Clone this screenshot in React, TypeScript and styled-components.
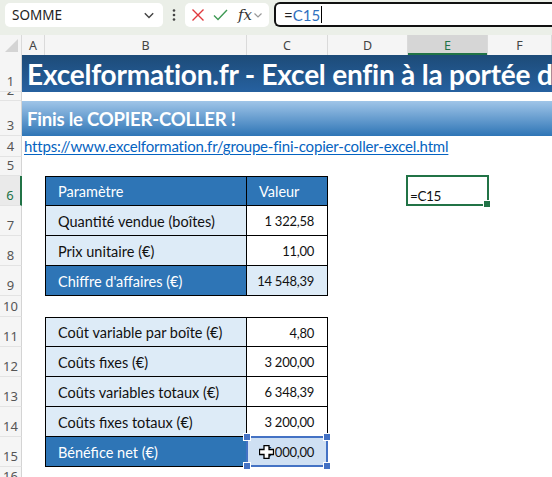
import React from 'react'
import styled, { createGlobalStyle, css } from 'styled-components'

const COLS = '22px 23px 202px 81px 80px 80px 1fr'

const GlobalStyle = createGlobalStyle`
  html, body {
    margin: 0;
    padding: 0;
    background: #fff;
  }
  body {
    width: 552px;
    height: 477px;
    overflow: hidden;
    font-family: Lato, "Liberation Sans", sans-serif;
  }
`

const Toolbar = styled.div`
  display: flex;
  align-items: flex-start;
  height: 35px;
  padding: 3px 0 0 5px;
  box-sizing: border-box;
  background: #ebefe8;
  font-family: "Noto Sans", "Open Sans", sans-serif;
`

const NameBox = styled.div`
  display: flex;
  align-items: center;
  justify-content: space-between;
  width: 158px;
  height: 24px;
  padding: 0 8px 0 7px;
  box-sizing: border-box;
  background: #fff;
  border-radius: 5px;
  font-size: 13.5px;
  color: #222;
`

const Dots = styled.div`
  display: flex;
  align-items: center;
  justify-content: center;
  width: 22px;
  height: 24px;
`

const FxGroup = styled.div`
  display: flex;
  align-items: center;
  gap: 8px;
  width: 84px;
  height: 24px;
  padding-left: 6px;
  box-sizing: border-box;
  background: #fff;
  border-radius: 5px;
`

const FxLabel = styled.span`
  font-family: "DejaVu Serif", "Liberation Serif", serif;
  font-style: italic;
  font-size: 15px;
  color: #333;
  margin-left: 2px;
`

const FxTail = styled.span`
  display: flex;
  align-items: center;
  gap: 1px;
`

const FormulaBox = styled.div`
  display: flex;
  align-items: center;
  flex: 1;
  height: 25px;
  margin: -1px 0 0 5px;
  padding-left: 8px;
  box-sizing: border-box;
  border: 2px solid #111;
  border-right: none;
  border-radius: 6px 0 0 6px;
  background: #fff;
  font-family: Lato, sans-serif;
  font-size: 15px;
  color: #222;
`

const RefText = styled.span`
  color: #2f6fbe;
`

const Caret = styled.span`
  display: inline-block;
  width: 1px;
  height: 17px;
  margin-left: 1px;
  background: #000;
`

const HeaderRow = styled.div`
  display: grid;
  grid-template-columns: ${COLS};
  height: 20px;
  background: #f5f5f5;
  font-family: "Noto Sans", "Open Sans", sans-serif;
  font-size: 12.5px;
  color: #444;
`

const Corner = styled.div`
  position: relative;
  border-right: 1px solid #dadada;
  &::after {
    content: '';
    position: absolute;
    right: 3px;
    bottom: 3px;
    border-style: solid;
    border-width: 0 0 13px 13px;
    border-color: transparent transparent #d4d4d4 transparent;
  }
`

const ColHead = styled.div<{ $active?: boolean }>`
  display: flex;
  align-items: center;
  justify-content: center;
  border-right: 1px solid #dadada;
  ${(p) =>
    p.$active &&
    css`
      background: #d6d6d6;
      color: #217346;
      box-shadow: inset 0 -2px 0 #217346;
    `}
`

const Row = styled.div<{ $h: number }>`
  display: grid;
  grid-template-columns: ${COLS};
  height: ${(p) => p.$h}px;
`

const RowHead = styled.div<{ $active?: boolean }>`
  display: flex;
  align-items: flex-end;
  justify-content: center;
  padding-bottom: 3px;
  box-sizing: border-box;
  overflow: hidden;
  background: #f5f5f5;
  border-right: 1px solid #d4d4d4;
  border-bottom: 1px solid #e3e3e3;
  font-family: "Noto Sans", "Open Sans", sans-serif;
  font-size: 13px;
  line-height: 14px;
  color: #555;
  ${(p) =>
    p.$active &&
    css`
      color: #217346;
      background: #eaeaea;
      border-right: 2px solid #217346;
    `}
`

const Banner = styled.div<{ $level: 1 | 2 }>`
  grid-column: 2 / -1;
  display: flex;
  align-items: center;
  padding-left: 5px;
  overflow: hidden;
  white-space: nowrap;
  color: #fff;
  font-weight: 700;
  ${(p) =>
    p.$level === 1
      ? css`
          background: linear-gradient(#1d4b78, #2661a0);
          font-size: 28px;
          letter-spacing: -0.22px;
        `
      : css`
          background: linear-gradient(#a0c5e8, #2e75b6);
          font-size: 18.5px;
          letter-spacing: -0.2px;
          padding-top: 1px;
        `}
`

const LinkCell = styled.div`
  grid-column: 2 / -1;
  display: flex;
  align-items: flex-end;
  padding: 0 0 2px 2px;
  white-space: nowrap;
  overflow: hidden;
`

const Link = styled.a`
  color: #0563c1;
  font-size: 15px;
  letter-spacing: -0.18px;
  text-decoration: underline;
  text-underline-offset: 2px;
`

const Cell = styled.div`
  position: relative;
`

type Tone = 'dark' | 'light' | 'white' | 'selected'

const tones = {
  dark: css`
    background: #2e75b6;
    color: #fff;
  `,
  light: css`
    background: #ddebf7;
    color: #111;
  `,
  white: css`
    background: #fff;
    color: #111;
  `,
  selected: css`
    background: #cfe0f3;
    color: #111;
  `,
}

const TableCell = styled.div<{ $tone: Tone; $first?: boolean; $left?: boolean; $numeric?: boolean }>`
  position: relative;
  display: flex;
  align-items: center;
  justify-content: ${(p) => (p.$numeric ? 'flex-end' : 'flex-start')};
  padding: 1px 13px 0 12px;
  box-sizing: border-box;
  white-space: nowrap;
  font-size: ${(p) => (p.$numeric ? '13px' : '14.5px')};
  letter-spacing: ${(p) => (p.$numeric ? '-0.25px' : '0')};
  border-right: 1px solid #000;
  border-bottom: 1px solid #000;
  ${(p) => p.$left && 'border-left: 1px solid #000;'}
  ${(p) => p.$first && 'border-top: 1px solid #000;'}
  ${(p) => tones[p.$tone]}
`

const ActiveCell = styled.div`
  position: absolute;
  inset: -1px -1px 0 -2px;
  display: flex;
  align-items: flex-end;
  padding: 0 0 0 2px;
  border: 2px solid #217346;
  font-size: 13.5px;
  letter-spacing: -0.4px;
  color: #111;
  &::after {
    content: '';
    position: absolute;
    right: -4px;
    bottom: -4px;
    width: 6px;
    height: 6px;
    background: #217346;
    border: 1px solid #fff;
  }
`

const RefFrame = styled.div`
  position: absolute;
  inset: -1px;
  border: 2px solid #4472c4;
  pointer-events: none;
`

const Handle = styled.span<{ $x: 'l' | 'r'; $y: 't' | 'b' }>`
  position: absolute;
  width: 6px;
  height: 6px;
  background: #4472c4;
  border: 1px solid #fff;
  ${(p) => (p.$x === 'l' ? 'left: -5px;' : 'right: -5px;')}
  ${(p) => (p.$y === 't' ? 'top: -5px;' : 'bottom: -5px;')}
`

const Pointer = styled.svg`
  position: absolute;
  left: 12px;
  top: 8px;
`

const ChevronDown = ({ size = 10, color = '#555' }: { size?: number; color?: string }) => (
  <svg width={size} height={size} viewBox="0 0 10 10">
    <path d="M1.5 3.5 L5 7 L8.5 3.5" fill="none" stroke={color} strokeWidth="1.2" />
  </svg>
)

type TableRow = { label: string; value: string; total?: boolean; head?: boolean }

const table1: TableRow[] = [
  { label: 'Paramètre', value: 'Valeur', head: true },
  { label: 'Quantité vendue (boîtes)', value: '1 322,58' },
  { label: 'Prix unitaire (€)', value: '11,00' },
  { label: "Chiffre d'affaires (€)", value: '14 548,39', total: true },
]

const table2: TableRow[] = [
  { label: 'Coût variable par boîte (€)', value: '4,80' },
  { label: 'Coûts fixes (€)', value: '3 200,00' },
  { label: 'Coûts variables totaux (€)', value: '6 348,39' },
  { label: 'Coûts fixes totaux (€)', value: '3 200,00' },
  { label: 'Bénéfice net (€)', value: '5 000,00', total: true },
]

function DataRow({
  n,
  row,
  first,
  active,
  selected,
}: {
  n: number
  row: TableRow
  first?: boolean
  active?: boolean
  selected?: boolean
}) {
  const valueTone: Tone = row.head ? 'dark' : selected ? 'selected' : row.total ? 'light' : 'white'
  return (
    <Row $h={30}>
      <RowHead $active={active}>{n}</RowHead>
      <Cell />
      <TableCell $tone={row.head || row.total ? 'dark' : 'light'} $left $first={first}>
        {row.label}
      </TableCell>
      <TableCell $tone={valueTone} $first={first} $numeric={!row.head}>
        {row.value}
        {selected && (
          <>
            <RefFrame>
              <Handle $x="l" $y="t" />
              <Handle $x="r" $y="t" />
              <Handle $x="l" $y="b" />
              <Handle $x="r" $y="b" />
            </RefFrame>
            <Pointer width="15" height="14" viewBox="0 0 15 14">
              <path
                d="M5 0.5 H10 V4.5 H14.5 V9.5 H10 V13.5 H5 V9.5 H0.5 V4.5 H5 Z"
                fill="#fff"
                stroke="#000"
                strokeWidth="1.3"
              />
            </Pointer>
          </>
        )}
      </TableCell>
      <Cell />
      <Cell>{active && <ActiveCell>=C15</ActiveCell>}</Cell>
      <Cell />
    </Row>
  )
}

function EmptyRow({ n, h }: { n: number; h: number }) {
  return (
    <Row $h={h}>
      <RowHead>{n}</RowHead>
    </Row>
  )
}

export default function App() {
  return (
    <>
      <GlobalStyle />
      <Toolbar>
        <NameBox>
          <span>SOMME</span>
          <ChevronDown size={12} color="#444" />
        </NameBox>
        <Dots>
          <svg width="4" height="14" viewBox="0 0 4 14">
            <circle cx="2" cy="2.5" r="1.3" fill="#444" />
            <circle cx="2" cy="7" r="1.3" fill="#444" />
            <circle cx="2" cy="11.5" r="1.3" fill="#444" />
          </svg>
        </Dots>
        <FxGroup>
          <svg width="14" height="14" viewBox="0 0 14 14">
            <path d="M1.5 1.5 L12.5 12.5 M12.5 1.5 L1.5 12.5" stroke="#e0393e" strokeWidth="1.4" />
          </svg>
          <svg width="15" height="14" viewBox="0 0 15 14">
            <path d="M1 7.5 L5 11.5 L14 2" fill="none" stroke="#3f9a55" strokeWidth="1.4" />
          </svg>
          <FxTail>
            <FxLabel>fx</FxLabel>
            <ChevronDown size={10} color="#999" />
          </FxTail>
        </FxGroup>
        <FormulaBox>
          =<RefText>C15</RefText>
          <Caret />
        </FormulaBox>
      </Toolbar>

      <HeaderRow>
        <Corner />
        <ColHead>A</ColHead>
        <ColHead>B</ColHead>
        <ColHead>C</ColHead>
        <ColHead>D</ColHead>
        <ColHead $active>E</ColHead>
        <ColHead>F</ColHead>
      </HeaderRow>

      <Row $h={37}>
        <RowHead>1</RowHead>
        <Banner $level={1}>Excelformation.fr - Excel enfin à la portée de tous</Banner>
      </Row>
      <EmptyRow n={2} h={9} />
      <Row $h={35}>
        <RowHead>3</RowHead>
        <Banner $level={2}>Finis le COPIER-COLLER !</Banner>
      </Row>
      <Row $h={21}>
        <RowHead>4</RowHead>
        <LinkCell>
          <Link href="#">https://www.excelformation.fr/groupe-fini-copier-coller-excel.html</Link>
        </LinkCell>
      </Row>
      <EmptyRow n={5} h={19} />

      {table1.map((row, i) => (
        <DataRow key={row.label} n={6 + i} row={row} first={i === 0} active={i === 0} />
      ))}

      <EmptyRow n={10} h={21} />

      {table2.map((row, i) => (
        <DataRow key={row.label} n={11 + i} row={row} first={i === 0} selected={i === 4} />
      ))}

      <EmptyRow n={16} h={20} />
    </>
  )
}
